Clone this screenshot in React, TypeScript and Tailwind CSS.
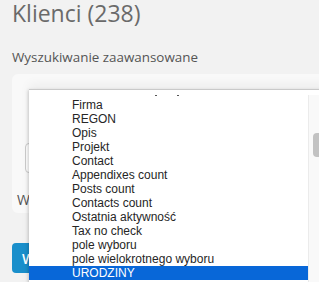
import React from "react";

const items = [
  "Firma",
  "REGON",
  "Opis",
  "Projekt",
  "Contact",
  "Appendixes count",
  "Posts count",
  "Contacts count",
  "Ostatnia aktywność",
  "Tax no check",
  "pole wyboru",
  "pole wielokrotnego wyboru",
  "URODZINY",
  "pole tekstowe",
];

export default function App() {
  return (
    <div className="relative h-[282px] w-[319px] overflow-hidden bg-[#f2f2f2] px-[12px] [font-family:'Open_Sans',sans-serif]">
      <h1 className="text-[23px] leading-[26px] font-normal text-[#6a6a6a]">Klienci (238)</h1>
      <p className="mt-[21px] text-[13.4px] leading-[20px] text-[#555555]">Wyszukiwanie zaawansowane</p>
      <div className="-mr-[12px] mt-[7px] flex h-[139px] flex-col items-start rounded-l-[6px] bg-[#f9f9f9] pl-[5px] pt-[69px]">
        <div className="ml-[8px] h-[30px] w-[200px] rounded-[4px] border border-[#cccccc] bg-white" />
        <div className="mt-[17px] text-[14px] leading-[20px] text-[#555555]">Wybierz pola</div>
      </div>
      <button className="mt-[30px] flex h-[30px] w-[110px] items-center rounded-[4px] bg-[#1a8fcb] pl-[10px] text-[14px] font-semibold text-white">
        Wyszukaj
      </button>

      <div className="absolute left-[29px] top-[90px] flex h-[200px] w-[300px] bg-white shadow-[0_-1px_0_#c9c9c9,-1px_0_3px_rgba(0,0,0,0.18),0_-6px_10px_rgba(0,0,0,0.05)] [font-family:'Liberation_Sans',Arial,sans-serif]">
        <div className="relative flex w-[279px] flex-col pt-[8px]">
          <span className="absolute left-[126px] top-[5px] h-[1px] w-[2px] bg-[#555555]" />
          <span className="absolute left-[148px] top-[5px] h-[1px] w-[2px] bg-[#555555]" />
          {items.map((t) => (
            <div
              key={t}
              className={
                t === "URODZINY"
                  ? "h-[14px] bg-[#0867d8] pl-[43px] text-[12px] leading-[14px] text-white"
                  : "h-[14px] pl-[43px] text-[12px] leading-[14px] text-[#262626]"
              }
            >
              {t}
            </div>
          ))}
        </div>
        <div className="mt-[5px] flex-1 border-l border-[#ebebeb] bg-[#f9f9f9] pt-[38px] pl-[4px]">
          <div className="h-[24px] w-[10px] rounded-[4px] bg-[#c2c2c2]" />
        </div>
      </div>
    </div>
  );
}
